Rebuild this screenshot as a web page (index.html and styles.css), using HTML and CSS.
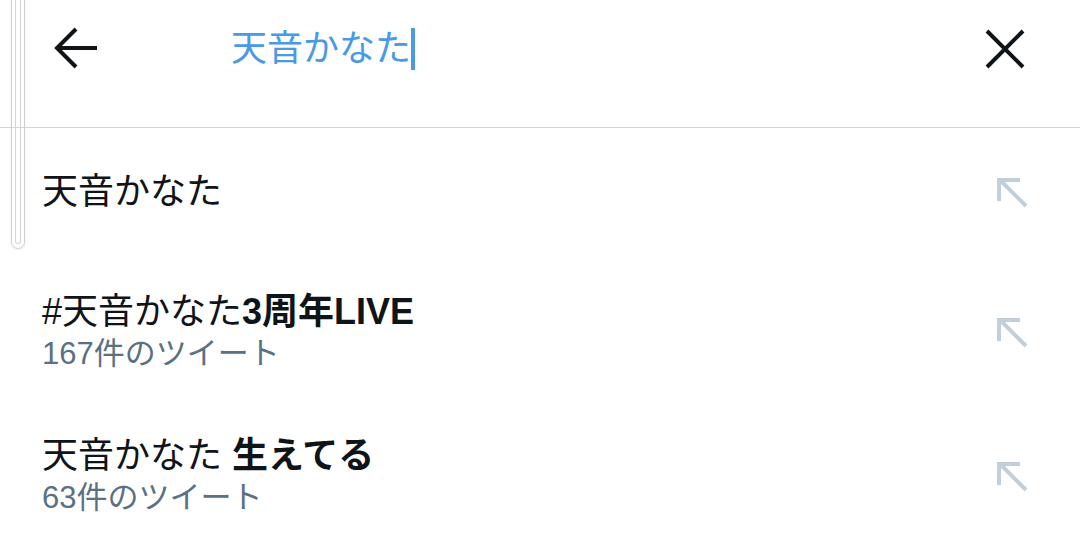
FILE: index.html
```html
<!DOCTYPE html>
<html lang="ja">
<head>
    <meta charset="UTF-8">
    <meta name="viewport" content="width=device-width, initial-scale=1.0">
    <title>検索</title>
    <link rel="stylesheet" href="styles.css">
</head>
<body>

    <div class="scroll-thumb"><div class="scroll-inner"></div></div>

    <header class="search-header">
        <button class="icon-btn back" aria-label="戻る">
            <svg width="44" height="44" viewBox="0 0 44 44">
                <path d="M44 21H5M23 2L4 21L23 40" fill="none" stroke="#0f1419" stroke-width="4"/>
            </svg>
        </button>
        <div class="search-field">
            <span class="query">天音かなた</span><span class="caret"></span>
        </div>
        <button class="icon-btn close" aria-label="クリア">
            <svg width="40" height="40" viewBox="0 0 40 40">
                <path d="M2 2L38 38M38 2L2 38" fill="none" stroke="#0f1419" stroke-width="4"/>
            </svg>
        </button>
    </header>

    <ul class="suggestions">
        <li class="suggestion first">
            <div class="text">
                <div class="title">天音かなた</div>
            </div>
            <svg class="fill-icon" width="32" height="32" viewBox="0 0 32 32">
                <path d="M2 24V3H23M3 3L29 29" fill="none" stroke="#c3cfd8" stroke-width="4"/>
            </svg>
        </li>
        <li class="suggestion">
            <div class="text">
                <div class="title">#天音かなた<b>3周年LIVE</b></div>
                <div class="count">167件のツイート</div>
            </div>
            <svg class="fill-icon" width="32" height="32" viewBox="0 0 32 32">
                <path d="M2 24V3H23M3 3L29 29" fill="none" stroke="#c3cfd8" stroke-width="4"/>
            </svg>
        </li>
        <li class="suggestion">
            <div class="text">
                <div class="title">天音かなた <b>生えてる</b></div>
                <div class="count">63件のツイート</div>
            </div>
            <svg class="fill-icon" width="32" height="32" viewBox="0 0 32 32">
                <path d="M2 24V3H23M3 3L29 29" fill="none" stroke="#c3cfd8" stroke-width="4"/>
            </svg>
        </li>
    </ul>

</body>
</html>
```

FILE: styles.css
```css
body {
    font-family: "Liberation Sans", "Noto Sans CJK JP", sans-serif;
    background: #ffffff;
    color: #0f1419;
    margin: 0;
    padding: 0;
    overflow: hidden;
}

.scroll-thumb {
    position: absolute;
    left: 11px;
    top: -20px;
    width: 12px;
    height: 267px;
    border: 1px solid #d0d0d0;
    border-radius: 7px;
    box-shadow: 0 1px 2px rgba(0, 0, 0, 0.08);
}

.scroll-inner {
    margin: 0 auto;
    width: 4px;
    height: 262px;
    border: 1px solid #d4d4d4;
    border-top: none;
    border-radius: 0 0 4px 4px;
}

.search-header {
    display: flex;
    align-items: center;
    height: 127px;
    border-bottom: 1px solid #d6d6d6;
    padding: 0 53px;
}

.icon-btn {
    background: none;
    border: none;
    padding: 0;
    display: flex;
}

.back {
    margin-top: -30px;
}

.search-field {
    flex: 1;
    display: flex;
    align-items: center;
    margin-left: 134px;
    margin-top: -30px;
}

.query {
    font-size: 36px;
    line-height: 44px;
    color: #4a99e6;
}

.caret {
    display: inline-block;
    width: 4px;
    height: 42px;
    background: #4a99e6;
}

.close {
    margin-top: -30px;
    margin-right: 2px;
}

.suggestions {
    list-style: none;
    margin: 0;
    padding: 0;
}

.suggestion {
    display: flex;
    align-items: center;
    justify-content: space-between;
    padding: 30px 51px 30px 42px;
}

.suggestion.first {
    padding-top: 42px;
    padding-bottom: 46px;
}

.title {
    font-size: 36px;
    line-height: 44px;
    white-space: nowrap;
}

.title b {
    font-weight: 700;
}

.count {
    font-size: 31px;
    line-height: 40px;
    color: #5b7083;
}

.fill-icon {
    flex-shrink: 0;
    margin-top: 2px;
}
```
